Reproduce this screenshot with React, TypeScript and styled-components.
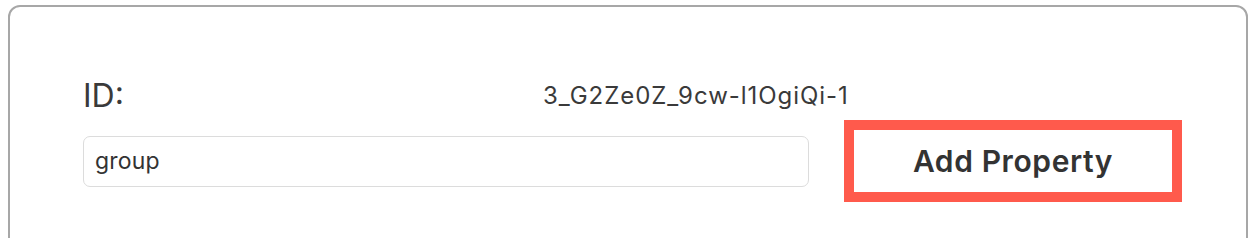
import React from "react";
import styled, { createGlobalStyle } from "styled-components";

const Global = createGlobalStyle`
  html, body { margin: 0; padding: 0; background: #ffffff; }
  body { font-family: Inter, "Noto Sans", sans-serif; color: #3a3a3a; }
  * { box-sizing: border-box; }
`;

const Card = styled.div`
  margin: 5px 0 0 8px;
  width: 1240px;
  height: 260px;
  border: 2px solid #a7a7a7;
  border-radius: 12px;
  padding: 72px 0 0 73px;
  display: flex;
  flex-direction: column;
  gap: 7px;
`;

const InfoRow = styled.div`
  display: grid;
  grid-template-columns: 460px 1fr;
  align-items: center;
  height: 34px;
`;

const Label = styled.span`
  font-size: 32px;
  line-height: 34px;
  color: #3a3a3a;
`;

const Value = styled.span`
  font-size: 24px;
  line-height: 34px;
  letter-spacing: 0.95px;
  color: #3a3a3a;
`;

const FormRow = styled.div`
  display: flex;
  align-items: center;
  gap: 35px;
`;

const TextInput = styled.input`
  width: 726px;
  height: 51px;
  border: 1.5px solid #dcdcdc;
  border-radius: 7px;
  padding: 0 11px;
  font-family: Inter, "Noto Sans", sans-serif;
  font-size: 23px;
  letter-spacing: 0.2px;
  color: #333;
  outline: none;
  background: #fff;
`;

const AddButton = styled.button`
  width: 338px;
  height: 82px;
  border: 10px solid #ff5a4c;
  background: #fff;
  font-family: Inter, "Noto Sans", sans-serif;
  font-size: 30px;
  font-weight: 600;
  letter-spacing: 0.6px;
  color: #333;
  padding: 0;
  cursor: pointer;
`;

export default function App() {
  return (
    <>
      <Global />
      <Card>
        <InfoRow>
          <Label>ID:</Label>
          <Value>3_G2Ze0Z_9cw-l1OgiQi-1</Value>
        </InfoRow>
        <FormRow>
          <TextInput defaultValue="group" />
          <AddButton>Add Property</AddButton>
        </FormRow>
      </Card>
    </>
  );
}
